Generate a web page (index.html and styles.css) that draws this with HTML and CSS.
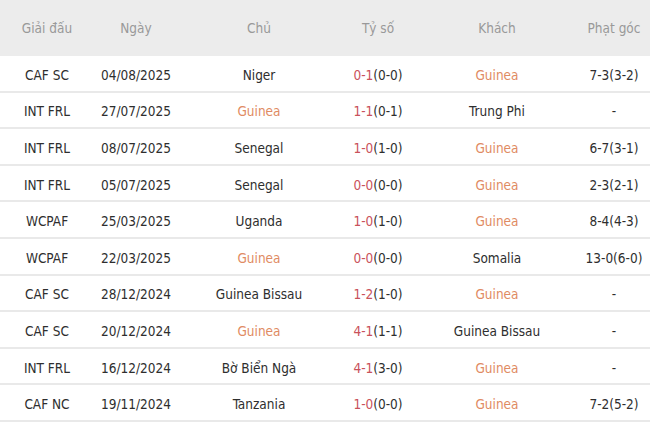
FILE: index.html
```html
<!DOCTYPE html>
<html lang="vi">
<head>
<meta charset="utf-8">
<title>Lịch sử đối đầu</title>
<link rel="stylesheet" href="styles.css">
</head>
<body>
<div class="table">
  <div class="row head">
    <div>Giải đấu</div><div>Ngày</div><div>Chủ</div><div>Tỷ số</div><div>Khách</div><div>Phạt góc</div>
  </div>
  <div class="row"><div>CAF SC</div><div>04/08/2025</div><div>Niger</div><div><span class="ft">0-1</span>(0-0)</div><div class="team">Guinea</div><div>7-3(3-2)</div></div>
  <div class="row"><div>INT FRL</div><div>27/07/2025</div><div class="team">Guinea</div><div><span class="ft">1-1</span>(0-1)</div><div>Trung Phi</div><div>-</div></div>
  <div class="row"><div>INT FRL</div><div>08/07/2025</div><div>Senegal</div><div><span class="ft">1-0</span>(1-0)</div><div class="team">Guinea</div><div>6-7(3-1)</div></div>
  <div class="row"><div>INT FRL</div><div>05/07/2025</div><div>Senegal</div><div><span class="ft">0-0</span>(0-0)</div><div class="team">Guinea</div><div>2-3(2-1)</div></div>
  <div class="row"><div>WCPAF</div><div>25/03/2025</div><div>Uganda</div><div><span class="ft">1-0</span>(1-0)</div><div class="team">Guinea</div><div>8-4(4-3)</div></div>
  <div class="row"><div>WCPAF</div><div>22/03/2025</div><div class="team">Guinea</div><div><span class="ft">0-0</span>(0-0)</div><div>Somalia</div><div>13-0(6-0)</div></div>
  <div class="row"><div>CAF SC</div><div>28/12/2024</div><div>Guinea Bissau</div><div><span class="ft">1-2</span>(1-0)</div><div class="team">Guinea</div><div>-</div></div>
  <div class="row"><div>CAF SC</div><div>20/12/2024</div><div class="team">Guinea</div><div><span class="ft">4-1</span>(1-1)</div><div>Guinea Bissau</div><div>-</div></div>
  <div class="row"><div>INT FRL</div><div>16/12/2024</div><div>Bờ Biển Ngà</div><div><span class="ft">4-1</span>(3-0)</div><div class="team">Guinea</div><div>-</div></div>
  <div class="row"><div>CAF NC</div><div>19/11/2024</div><div>Tanzania</div><div><span class="ft">1-0</span>(0-0)</div><div class="team">Guinea</div><div>7-2(5-2)</div></div>
</div>
</body>
</html>
```
FILE: styles.css
```css
html, body {
  margin: 0;
  padding: 0;
  background: #ffffff;
}
.table {
  width: 650px;
  font-family: "DejaVu Sans Condensed", "DejaVu Sans", sans-serif;
  font-stretch: condensed;
  font-size: 13.5px;
  color: #2e2e2e;
}
.row {
  display: grid;
  grid-template-columns: 94px 84px 162px 76px 162px 72px;
  height: 36.6px;
  box-sizing: border-box;
  padding-top: 3px;
  border-bottom: 2px solid #e9e9e9;
  align-items: center;
  text-align: center;
  white-space: nowrap;
}
.row.head {
  height: 56px;
  padding-top: 0;
  background: #ececec;
  color: #999999;
  border-bottom: none;
}
.team {
  color: #df8b63;
}
.ft {
  color: #c9525b;
}
```
